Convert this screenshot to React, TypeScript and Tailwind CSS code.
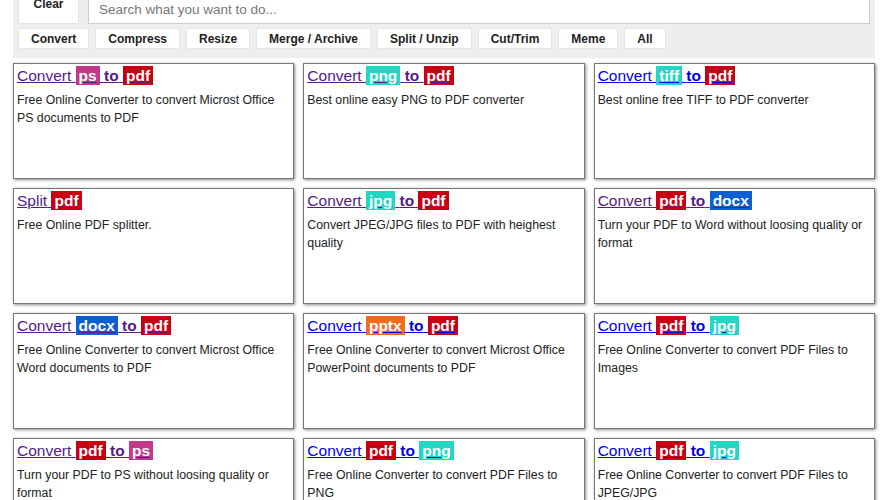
const fmt: Record<string, string> = {
  ps: 'bg-[#c2398a]',
  pdf: 'bg-[#c70014]',
  png: 'bg-[#22d6c4]',
  jpg: 'bg-[#22d6c4]',
  tiff: 'bg-[#22d6c4]',
  docx: 'bg-[#0c5fd0]',
  pptx: 'bg-[#f26a1b]',
}

type Tool = { verb: string; from: string; to?: string; desc: string; visited: boolean }

const tools: Tool[] = [
  { verb: 'Convert', from: 'ps', to: 'pdf', desc: 'Free Online Converter to convert Microst Office PS documents to PDF', visited: true },
  { verb: 'Convert', from: 'png', to: 'pdf', desc: 'Best online easy PNG to PDF converter', visited: true },
  { verb: 'Convert', from: 'tiff', to: 'pdf', desc: 'Best online free TIFF to PDF converter', visited: false },
  { verb: 'Split', from: 'pdf', desc: 'Free Online PDF splitter.', visited: true },
  { verb: 'Convert', from: 'jpg', to: 'pdf', desc: 'Convert JPEG/JPG files to PDF with heighest quality', visited: true },
  { verb: 'Convert', from: 'pdf', to: 'docx', desc: 'Turn your PDF to Word without loosing quality or format', visited: true },
  { verb: 'Convert', from: 'docx', to: 'pdf', desc: 'Free Online Converter to convert Microst Office Word documents to PDF', visited: true },
  { verb: 'Convert', from: 'pptx', to: 'pdf', desc: 'Free Online Converter to convert Microst Office PowerPoint documents to PDF', visited: false },
  { verb: 'Convert', from: 'pdf', to: 'jpg', desc: 'Free Online Converter to convert PDF Files to Images', visited: false },
  { verb: 'Convert', from: 'pdf', to: 'ps', desc: 'Turn your PDF to PS without loosing quality or format', visited: true },
  { verb: 'Convert', from: 'pdf', to: 'png', desc: 'Free Online Converter to convert PDF Files to PNG', visited: false },
  { verb: 'Convert', from: 'pdf', to: 'jpg', desc: 'Free Online Converter to convert PDF Files to JPEG/JPG', visited: false },
]

const filters = ['Convert', 'Compress', 'Resize', 'Merge / Archive', 'Split / Unzip', 'Cut/Trim', 'Meme', 'All']

function Badge({ name }: { name: string }) {
  return <span className={`${fmt[name]} px-[3px] py-[1px] font-bold text-white`}>{name}</span>
}

export default function App() {
  return (
    <div className="w-[888px] h-[500px] overflow-hidden bg-white font-['Liberation_Sans',Arial,sans-serif]">
      {/* Search / filter panel */}
      <div className="mx-[13px] -mt-[20px] bg-[#eeeeee] px-[5px] pt-[4px] pb-[9px]">
        <div className="flex items-end gap-[9px]">
          <button className="h-[40px] w-[61px] border border-[#e2e2e2] bg-white text-[12px] font-bold text-[#222]">
            Clear
          </button>
          <input
            type="text"
            placeholder="Search what you want to do..."
            className="h-[30px] flex-1 border border-[#cccccc] bg-white px-[10px] text-[13.5px] text-[#222] placeholder-[#777] outline-none"
          />
        </div>
        <div className="mt-[4px] flex gap-[6px]">
          {filters.map((f) => (
            <button
              key={f}
              className="h-[21px] border border-[#e6e6e6] bg-white px-[12px] text-[12px] font-bold text-[#222]"
            >
              {f}
            </button>
          ))}
        </div>
      </div>

      {/* Tool cards */}
      <div className="mt-[5px] grid grid-cols-3 gap-x-[9px] gap-y-[9px] px-[13px]">
        {tools.map((t, i) => (
          <div
            key={i}
            className="h-[116px] border border-[#777] bg-white px-[3px] pt-0 shadow-[1px_1px_3px_#888]"
          >
            <a
              href="#"
              className={`text-[15.5px] leading-[20px] underline ${t.visited ? 'text-[#551a8b]' : 'text-[#0000ee]'}`}
            >
              {t.verb} <Badge name={t.from} />
              {t.to && (
                <>
                  {' '}
                  <span className="font-bold">to</span> <Badge name={t.to} />
                </>
              )}
            </a>
            <p className="mt-[3px] text-[12.3px] leading-[18px] text-[#222]">{t.desc}</p>
          </div>
        ))}
      </div>
    </div>
  )
}
